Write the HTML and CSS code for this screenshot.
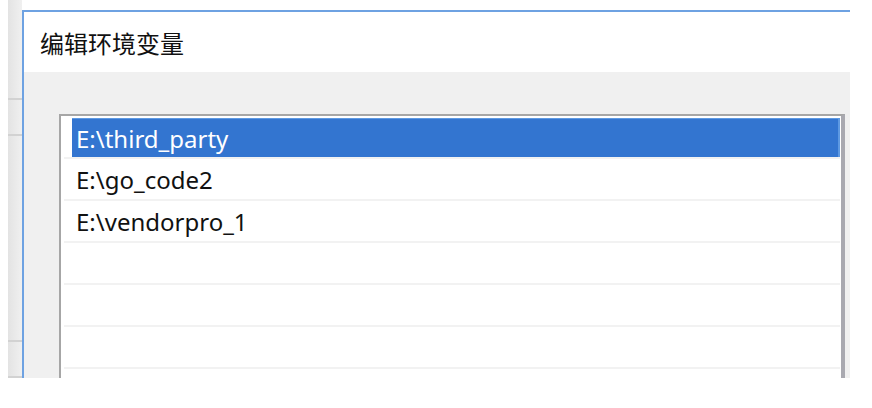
FILE: index.html
```html
<!DOCTYPE html>
<html lang="zh-CN">
<head>
    <meta charset="UTF-8">
    <title>编辑环境变量</title>
    <link rel="stylesheet" href="styles.css">
</head>
<body>
    <div class="shot">
        <div class="gap"></div>
        <div class="strip">
            <div class="band b1"></div>
            <div class="band b2"></div>
            <div class="band b3"></div>
            <div class="band b4"></div>
        </div>
        <div class="dialog">
            <div class="title">编辑环境变量</div>
            <div class="body">
                <div class="listbox">
                    <div class="row selected"><div class="cell">E:\third_party</div></div>
                    <div class="row"><div class="cell">E:\go_code2</div></div>
                    <div class="row"><div class="cell">E:\vendorpro_1</div></div>
                    <div class="row"><div class="cell"></div></div>
                    <div class="row"><div class="cell"></div></div>
                    <div class="row"><div class="cell"></div></div>
                    <div class="row"><div class="cell"></div></div>
                </div>
            </div>
        </div>
    </div>
</body>
</html>
```

FILE: styles.css
```css
body {
    margin: 0;
    background: #ffffff;
    font-family: "Noto Sans", "Noto Sans CJK SC", sans-serif;
}
.shot {
    display: flex;
    width: 850px;
    height: 378px;
    overflow: hidden;
}
.gap {
    width: 8px;
    flex: none;
}
.strip {
    width: 14px;
    flex: none;
    display: flex;
    flex-direction: column;
    background: linear-gradient(to right, #e3e3e3, #f0f0f0);
}
.band {
    border-bottom: 2px solid #d2d2d2;
}
.b1 { height: 98px; }
.b2 { height: 34px; }
.b3 { height: 204px; }
.b4 { height: 34px; }

.dialog {
    flex: 1;
    margin-top: 10px;
    border-top: 2px solid #6ea2e2;
    border-left: 2px solid #6ea2e2;
    display: flex;
    flex-direction: column;
}
.title {
    height: 60px;
    flex: none;
    background: #ffffff;
    display: flex;
    align-items: center;
    padding-left: 16px;
    font-size: 24px;
    color: #111111;
}
.body {
    flex: 1;
    background: #f0f0f0;
    padding: 42px 5px 0 35px;
}
.listbox {
    height: 400px;
    background: #ffffff;
    border-top: 2px solid #a6a6a6;
    border-left: 2px solid #a6a6a6;
    border-right: 4px solid #a9a9b0;
    padding: 1px 1px 0 3px;
}
.row {
    height: 39px;
    padding-top: 1px;
    border-bottom: 2px solid #f2f2f2;
}
.cell {
    height: 39px;
    margin-left: 8px;
    padding-left: 4px;
    display: flex;
    align-items: center;
    font-size: 24px;
    color: #111111;
    box-sizing: border-box;
}
.selected .cell {
    background: #3375d0;
    border-top: 1px solid #5d99e2;
    border-right: 2px solid #5d99e2;
    color: #ffffff;
}
```
